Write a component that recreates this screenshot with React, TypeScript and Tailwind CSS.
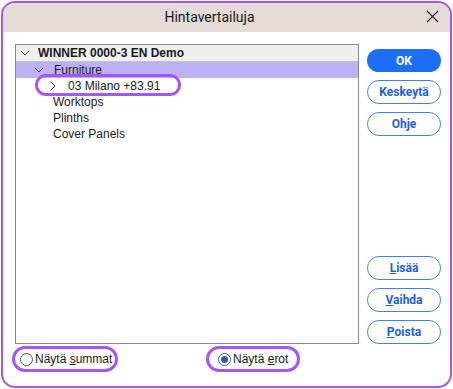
import React from "react";

const Chevron = ({ dir, className }: { dir: "down" | "right"; className?: string }) => (
  <svg width="10" height="10" viewBox="0 0 10 10" className={className} fill="none" stroke="#404040" strokeWidth="1">
    {dir === "down" ? <path d="M1 3 L5 7 L9 3" /> : <path d="M2.5 0.5 L7 5 L2.5 9.5" />}
  </svg>
);

const Btn = ({ children, primary }: { children: React.ReactNode; primary?: boolean }) => (
  <button
    className={
      primary
        ? "h-[23px] w-[74px] rounded-full bg-[#1d6ff5] text-white text-[12px] font-bold flex items-center justify-center"
        : "h-[24px] w-[74px] rounded-full border border-[#3b82f6] bg-white text-[#1d5fe0] text-[12px] font-bold flex items-center justify-center"
    }
    style={{ fontFamily: "Roboto, 'Liberation Sans', sans-serif" }}
  >
    {children}
  </button>
);

export default function App() {
  return (
    <div className="w-[453px] h-[389px] bg-white p-px">
      <div className="relative w-full h-full border-2 border-[#a855f7] rounded-[14px] overflow-hidden flex flex-col bg-white">
        {/* Title bar */}
        <div className="h-[29px] bg-[#e6dcd7] relative flex items-center justify-center pr-[34px] shrink-0">
          <span className="text-[14px] text-[#1a1a1a]" style={{ fontFamily: "Roboto, sans-serif" }}>
            Hintavertailuja
          </span>
          <svg className="absolute right-[11px] top-[7px]" width="13" height="13" viewBox="0 0 13 13" stroke="#222" strokeWidth="1.1">
            <path d="M1 1 L12 12 M12 1 L1 12" />
          </svg>
        </div>

        {/* Body */}
        <div className="flex-1 flex flex-col pl-[12px] pr-[9px] pt-[12px]">
          <div className="flex gap-[8px] h-[300px]">
            {/* Tree */}
            <div
              className="relative flex-1 border border-[#8a8a8a] bg-white text-[12px] text-[#1a1a1a]"
              style={{ fontFamily: "'Liberation Sans', Arial, sans-serif" }}
            >
              <div className="h-[17px] bg-[#f0f0f0] border-b border-[#c4c4c4] flex items-center pl-[4px]">
                <Chevron dir="down" />
                <span className="ml-[8px] font-bold">WINNER 0000-3 EN Demo</span>
              </div>
              <div className="h-[16px] bg-[#bdb1f5] flex items-center pl-[18px]">
                <Chevron dir="down" />
                <span className="ml-[10px]">Furniture</span>
              </div>
              <div className="h-[16px] flex items-center pl-[32px]">
                <Chevron dir="right" />
                <span className="ml-[10px]">03 Milano +83.91</span>
              </div>
              <div className="h-[16px] flex items-center pl-[37px]">Worktops</div>
              <div className="h-[16px] flex items-center pl-[37px]">Plinths</div>
              <div className="h-[16px] flex items-center pl-[37px]">Cover Panels</div>

              {/* highlight annotation */}
              <div className="absolute left-[19px] top-[29px] w-[146px] h-[22px] rounded-full border-[3px] border-[#a855f7]" />
            </div>

            {/* Buttons */}
            <div className="w-[74px] flex flex-col justify-between pt-[5px]">
              <div className="flex flex-col gap-[8px]">
                <Btn primary>OK</Btn>
                <Btn>Keskeytä</Btn>
                <Btn>Ohje</Btn>
              </div>
              <div className="flex flex-col gap-[8px]">
                <Btn>
                  <span><u>L</u>isää</span>
                </Btn>
                <Btn>
                  <span><u>V</u>aihda</span>
                </Btn>
                <Btn>
                  <span><u>P</u>oista</span>
                </Btn>
              </div>
            </div>
          </div>

          {/* Radios */}
          <div
            className="flex items-center mt-[2px] h-[26px] text-[12px] text-[#1a1a1a]"
            style={{ fontFamily: "'Liberation Sans', Arial, sans-serif" }}
          >
            <div className="relative w-[106px] h-[26px] -ml-[3px] rounded-full border-[3px] border-[#a855f7] flex items-center pl-[5px]">
              <span className="w-[13px] h-[13px] rounded-full border border-[#555] bg-white" />
              <span className="ml-[2px]">Näytä <u>s</u>ummat</span>
            </div>
            <div className="relative ml-[88px] w-[94px] h-[26px] rounded-full border-[3px] border-[#a855f7] flex items-center pl-[9px]">
              <span className="w-[13px] h-[13px] rounded-full border border-[#3d5a99] bg-white flex items-center justify-center">
                <span className="w-[7px] h-[7px] rounded-full bg-[#3d5a99]" />
              </span>
              <span className="ml-[2px]">Näytä <u>e</u>rot</span>
            </div>
          </div>
        </div>
      </div>
    </div>
  );
}
